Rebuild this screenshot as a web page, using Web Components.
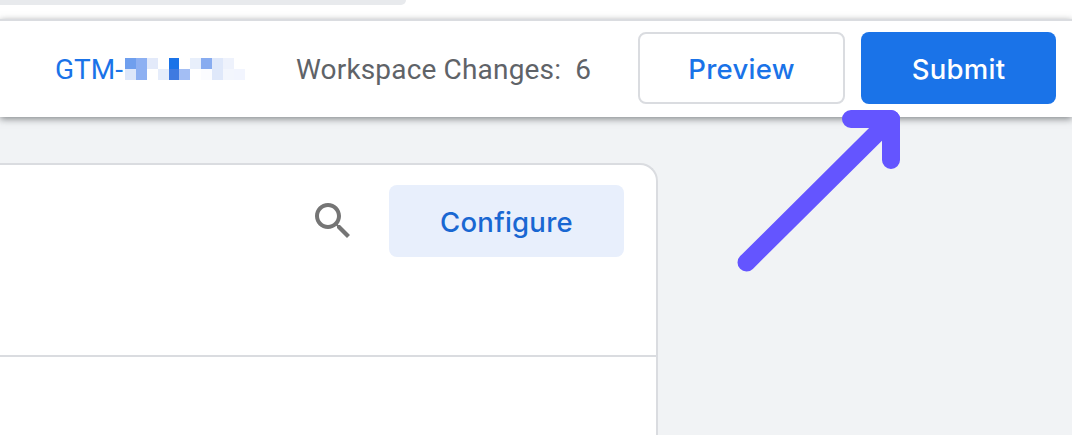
<!DOCTYPE html>
<html>
<head>
<meta charset="utf-8">
<style>
  html, body { margin: 0; height: 100%; overflow: hidden; background: #f1f3f5; }
  body { position: relative; font-family: Roboto, "Liberation Sans", sans-serif; }
</style>
</head>
<body>
<top-strip></top-strip>
<gtm-header>
  <gtm-id slot="id"></gtm-id>
  <span slot="changes">Workspace Changes:&nbsp; 6</span>
  <gtm-button slot="actions" kind="outline">Preview</gtm-button>
  <gtm-button slot="actions" kind="primary">Submit</gtm-button>
</gtm-header>
<gtm-card>
  <search-icon slot="tools"></search-icon>
  <gtm-button slot="tools" kind="soft">Configure</gtm-button>
</gtm-card>
<arrow-note></arrow-note>

<script>
class TopStrip extends HTMLElement {
  constructor() {
    super();
    this.attachShadow({mode: 'open'}).innerHTML = `
    <style>
      :host { display: block; height: 19px; background: #fff; }
      .pill { width: 406px; height: 5px; background: #e8eaed; border-radius: 0 0 14px 0; }
    </style>
    <div class="pill"></div>`;
  }
}

class GtmHeader extends HTMLElement {
  constructor() {
    super();
    this.attachShadow({mode: 'open'}).innerHTML = `
    <style>
      :host {
        display: flex; align-items: center; position: relative; z-index: 1;
        height: 94px; padding: 0 16px 2px 55px;
        background: #fff; border-top: 2px solid #dadce0;
        box-shadow: 0 2px 7px rgba(60,64,67,.6);
      }
      .id { width: 241px; flex: none; padding-top: 2px; }
      .changes { flex: 1; padding-top: 2px; font-size: 28px; letter-spacing: .17px; color: #5f6368; white-space: nowrap; }
      .actions { display: flex; gap: 16px; }
    </style>
    <div class="id"><slot name="id"></slot></div>
    <div class="changes"><slot name="changes"></slot></div>
    <div class="actions"><slot name="actions"></slot></div>`;
  }
}

class GtmId extends HTMLElement {
  constructor() {
    super();
    // blurred container id, one colour per mosaic cell
    const cells = [
      '#6f9fee', '#8db0f2', '#e3eafa', '#fff', '#1a73e8', '#fff', '#e8effb', '#88acf0', '#dfe8fa', '#eef2fc', '#fff',
      '#dde7fa', '#8db0f2', '#fff', '#e6edfb', '#3f7ae0', '#a3bef4', '#fff', '#fbfcff', '#dfe8fa', '#f3f6fd', '#f2f5fe'
    ];
    this.attachShadow({mode: 'open'}).innerHTML = `
    <style>
      :host { display: flex; align-items: center; font-size: 28px; color: #1a73e8; }
      .mosaic { display: grid; grid-template-columns: repeat(11, 10.9px); grid-auto-rows: 11px; margin-left: 2px; }
    </style>
    <span>GTM-</span>
    <div class="mosaic">${cells.map(c => `<i style="background:${c}"></i>`).join('')}</div>`;
  }
}

class GtmButton extends HTMLElement {
  constructor() {
    super();
    this.attachShadow({mode: 'open'}).innerHTML = `
    <style>
      :host {
        display: flex; align-items: center; justify-content: center;
        box-sizing: border-box; height: 72px; padding-top: 2px;
        font: 500 27.5px Inter, Roboto, sans-serif; letter-spacing: .25px;
        border-radius: 8px;
      }
      :host([kind="outline"]) { width: 207px; background: #fff; color: #1a73e8; border: 2px solid #dadce0; }
      :host([kind="primary"]) { width: 195px; background: #1a73e8; color: #fff; }
      :host([kind="soft"]) { width: 235px; background: #e8effc; color: #1967d2; }
    </style>
    <slot></slot>`;
  }
}

class GtmCard extends HTMLElement {
  constructor() {
    super();
    this.attachShadow({mode: 'open'}).innerHTML = `
    <style>
      :host {
        display: block; box-sizing: border-box; width: 658px; height: 272px; margin-top: 46px;
        background: #fff; border: 2px solid #dadce0; border-left: 0; border-bottom: 0; border-radius: 0 18px 0 0;
      }
      .tools {
        display: flex; align-items: flex-start; justify-content: flex-end; gap: 32px;
        height: 192px; box-sizing: border-box; padding: 20px 32px 0 0;
        border-bottom: 2px solid #dadce0;
      }
    </style>
    <div class="tools"><slot name="tools"></slot></div>`;
  }
}

class SearchIcon extends HTMLElement {
  constructor() {
    super();
    this.attachShadow({mode: 'open'}).innerHTML = `
    <style>
      :host { display: block; width: 48px; height: 48px; margin-top: 12px; }
      svg { display: block; fill: #757575; }
    </style>
    <svg width="48" height="48" viewBox="0 0 24 24"><path d="M15.5 14h-.79l-.28-.27C15.41 12.59 16 11.11 16 9.5 16 5.91 13.09 3 9.5 3S3 5.91 3 9.5 5.91 16 9.5 16c1.61 0 3.09-.59 4.23-1.57l.27.28v.79l5 4.99L20.49 19l-4.99-5zm-6 0C7.01 14 5 11.99 5 9.5S7.01 5 9.5 5 14 7.01 14 9.5 11.99 14 9.5 14z"/></svg>`;
  }
}

class ArrowNote extends HTMLElement {
  constructor() {
    super();
    this.attachShadow({mode: 'open'}).innerHTML = `
    <style>
      :host { position: absolute; left: 730px; top: 100px; width: 180px; height: 180px; z-index: 2; }
      svg { display: block; }
    </style>
    <svg width="180" height="180" viewBox="730 100 180 180" fill="none" stroke="#6455ff" stroke-width="18" stroke-linecap="round" stroke-linejoin="round">
      <path d="M746.5 262.5L891 119"/>
      <path d="M851 119H891V160"/>
    </svg>`;
  }
}

customElements.define('top-strip', TopStrip);
customElements.define('gtm-header', GtmHeader);
customElements.define('gtm-id', GtmId);
customElements.define('gtm-button', GtmButton);
customElements.define('gtm-card', GtmCard);
customElements.define('search-icon', SearchIcon);
customElements.define('arrow-note', ArrowNote);
</script>
</body>
</html>
